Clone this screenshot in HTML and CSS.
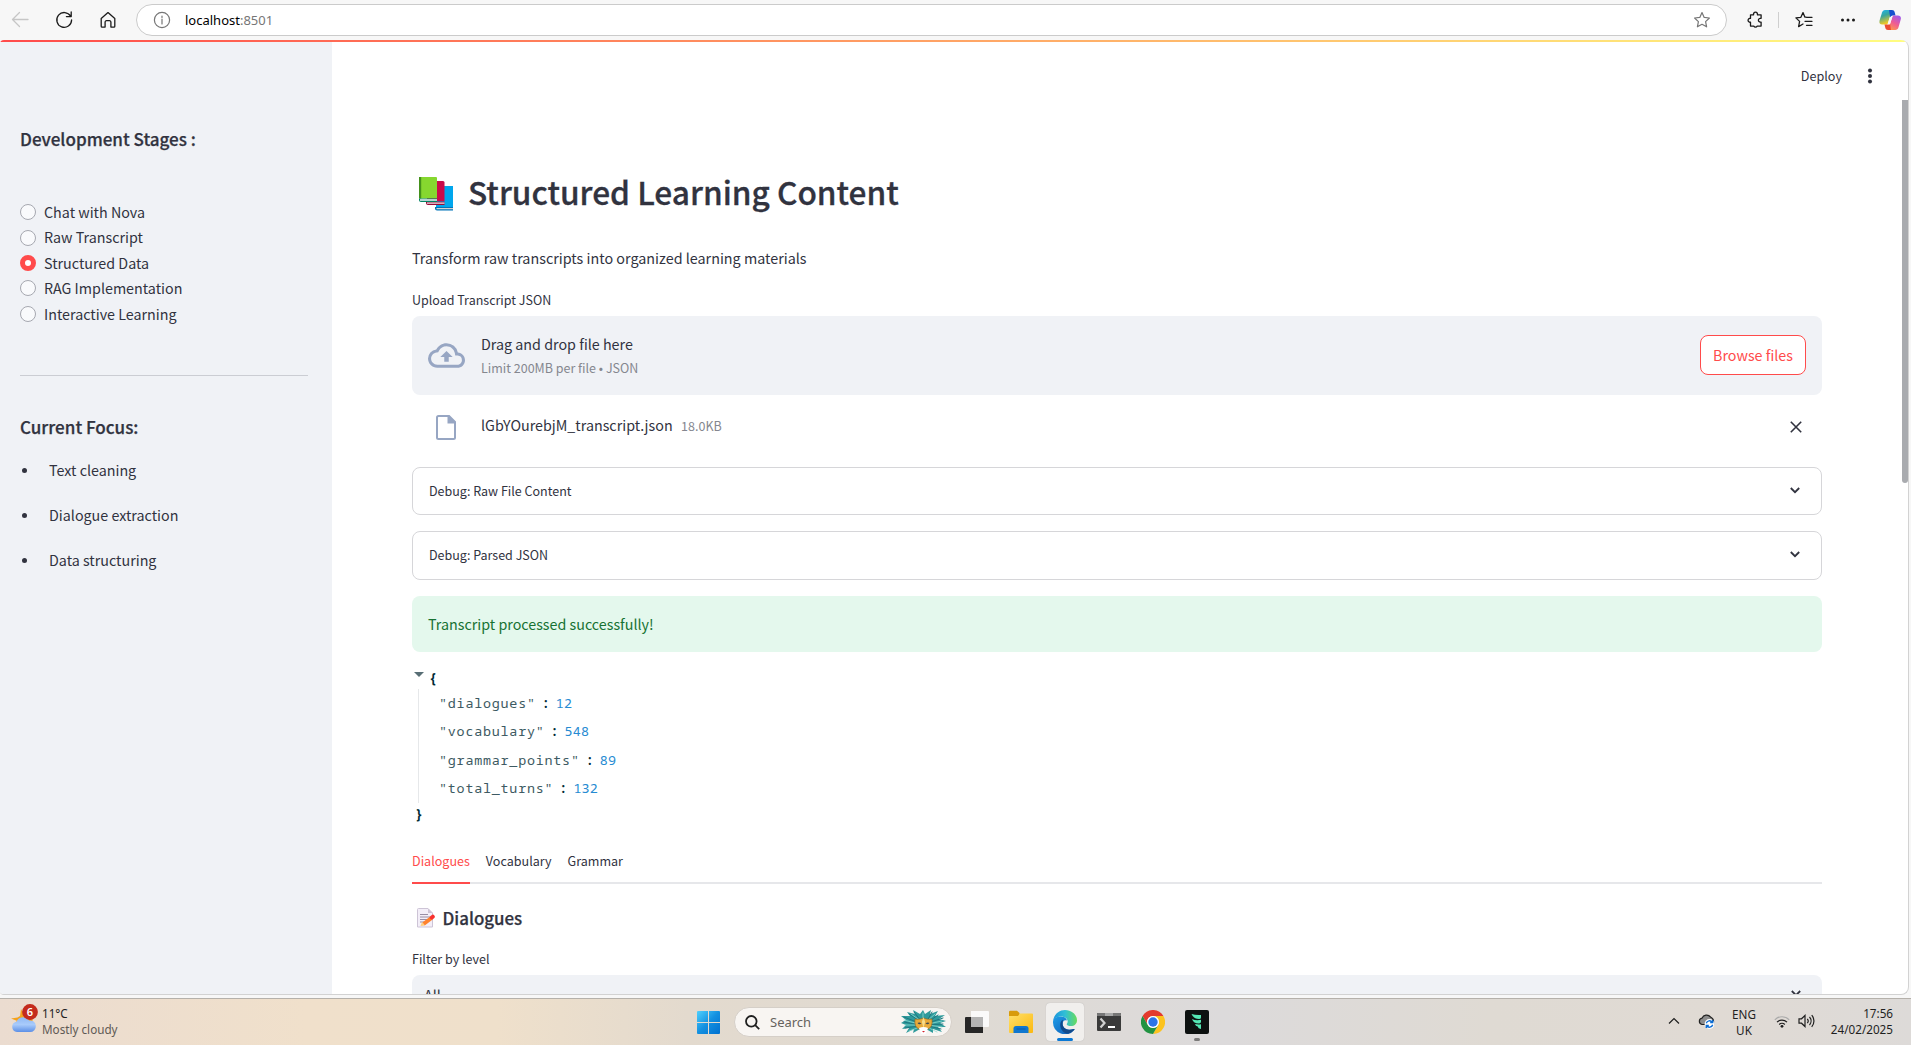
FILE: index.html
```html
<!DOCTYPE html>
<html lang="en">
<head>
<meta charset="utf-8">
<title>localhost:8501</title>
<link rel="stylesheet" href="styles.css">
</head>
<body>
<div class="toolbar">
  <svg class="ic back" width="18" height="18" viewBox="0 0 18 18"><path d="M17 8.5H1.5M8.5 1.5l-7 7 7 7"/></svg>
  <svg class="ic reload" width="18" height="18" viewBox="0 0 18 18"><path d="M15.6 5.2A7.4 7.4 0 1 0 16.6 9M16.2 1v4.6h-4.8"/></svg>
  <svg class="ic home" width="18" height="18" viewBox="0 0 18 18"><path d="M2.2 7.6 9 1.6l6.8 6v7.6a.9.9 0 0 1-.9.9h-3v-5a1.4 1.4 0 0 0-1.4-1.4h-3a1.4 1.4 0 0 0-1.4 1.4v5h-3a.9.9 0 0 1-.9-.9z"/></svg>
  <div class="address">
    <svg class="ic info" width="18" height="18" viewBox="0 0 18 18"><circle cx="9" cy="9" r="7.6"/><path d="M9 8v5M9 5v1.4"/></svg>
    <span class="url">localhost<i>:8501</i></span>
    <svg class="ic star" width="18" height="18" viewBox="0 0 18 18"><path d="m9 1.6 2.2 4.8 5.2.6-3.8 3.6 1 5.2L9 13.3l-4.600 2.500 1-5.200L1.600 7l5.200-.6z"/></svg>
  </div>
  <svg class="ic puzzle" width="18" height="18" viewBox="0 0 18 18"><path d="M4.500 3.800h3.100a2 2 0 1 1 3.800 0h3.700v3.500h-.8a1.900 1.900 0 1 0 0 3.800h.8v4h-3.900a2 2 0 0 1-3.400 0H4.500v-3.900a2 2 0 1 1 0-3.900z"/></svg>
  <span class="vsep"></span>
  <svg class="ic favs" width="18" height="18" viewBox="0 0 18 18"><path d="M11 6.200 9.800 6 8 1.600 5.900 6.300l-5 .6 3.700 3.500-1 5.200L8 13M11.500 6.300h5.500M10 10.300h7M11.500 14.300h5.500"/></svg>
  <svg class="more" width="16" height="4" viewBox="0 0 16 4"><circle cx="2.500" cy="2" r="1.500"/><circle cx="8" cy="2" r="1.500"/><circle cx="13.500" cy="2" r="1.500"/></svg>
  <svg class="copilot" width="22" height="20" viewBox="0 0 22 20">
    <defs>
      <linearGradient id="ca" x1="0" y1="0" x2="0.300" y2="1"><stop offset="0" stop-color="#1bb5f0"/><stop offset=".45" stop-color="#3aa59b"/><stop offset="1" stop-color="#f3c921"/></linearGradient>
      <linearGradient id="cb" x1="0.700" y1="0" x2="0.200" y2="1"><stop offset="0" stop-color="#a45be8"/><stop offset=".5" stop-color="#ef5c93"/><stop offset="1" stop-color="#ff9a4a"/></linearGradient>
    </defs>
    <path fill="url(#ca)" d="M6 0h7L8.500 14.500H3.200C1 14.500 0 13 .5 10.800L3 2.500C3.500 1 4.500 0 6 0z"/>
    <path fill="#1751cf" d="M10 0h3c1.500 0 2.300.8 2.700 2.200l.8 3.300h-2.300c-1.600 0-2.500.8-3 2.300z"/>
    <path fill="url(#cb)" d="M13.800 5.500h5c2.400 0 3.500 1.500 3 3.700l-2.300 8C19 19 18 20 16.200 20H9z"/>
    <path fill="#ea4c33" d="M12 20H9c-1.500 0-2.300-.8-2.700-2.200l-.8-3.300h2.300c1.600 0 2.500-.8 3-2.300z"/>
    <path fill="#f7f7f7" d="m10.800 7.500 3-2-2.500 7.800-.5 1.200H8.500z"/>
  </svg>
</div>

<div class="viewport">
  <div class="rainbow"></div>
  <div class="app">
    <aside class="sidebar">
      <h3>Development Stages :</h3>
      <div class="radios">
        <label class="radio"><b></b>Chat with Nova</label>
        <label class="radio"><b></b>Raw Transcript</label>
        <label class="radio on"><b></b>Structured Data</label>
        <label class="radio"><b></b>RAG Implementation</label>
        <label class="radio"><b></b>Interactive Learning</label>
      </div>
      <hr>
      <h3>Current Focus:</h3>
      <ul>
        <li>Text cleaning</li>
        <li>Dialogue extraction</li>
        <li>Data structuring</li>
      </ul>
    </aside>

    <main class="main">
      <div class="header">
        <span>Deploy</span>
        <svg width="6" height="16" viewBox="0 0 6 16"><circle cx="3" cy="2.500" r="2"/><circle cx="3" cy="8" r="2"/><circle cx="3" cy="13.500" r="2"/></svg>
      </div>
      <div class="content">
        <h1>
          <svg width="36" height="34" viewBox="0 0 36 34">
            <path fill="#00a6ed" d="M18 9h17v21H18z"/><path fill="#0074ba" d="M17 30h18v3.500H19q-2 0-2-2z"/><path fill="#d3d3d3" d="M18.500 31H35v1.300H18.500z"/>
            <path fill="#ca0b4a" d="M9 4h16q1.500 0 1.500 1.500V24H9z"/><path fill="#990838" d="M8 24.500h18.500V28H10q-2 0-2-2z"/><path fill="#e6e6e6" d="M9 25.500h17.500v1.300H9z"/>
            <path fill="#86d72f" d="M1.500 0H18q1 0 1 1v20.500H1.500z"/><path fill="#44911b" d="M1 0h2.200v21.500H1z"/><path fill="#008463" d="M1 21.500h18V25H3q-2 0-2-2z"/><path fill="#f3eef8" d="M2 22.300h17v1.400H2z"/>
          </svg>
          <span>Structured Learning Content</span>
        </h1>
        <p class="lead">Transform raw transcripts into organized learning materials</p>
        <div class="label">Upload Transcript JSON</div>
        <div class="dropzone">
          <svg width="37" height="37" viewBox="0 0 24 24"><path d="M19.350 10.040A7.490 7.490 0 0 0 12 4C9.110 4 6.600 5.640 5.350 8.040A5.994 5.994 0 0 0 0 14c0 3.310 2.690 6 6 6h13c2.760 0 5-2.240 5-5 0-2.640-2.050-4.780-4.650-4.960zM19 18H6c-2.210 0-4-1.790-4-4 0-2.050 1.530-3.760 3.560-3.970l1.070-.11.5-.95A5.469 5.469 0 0 1 12 6c2.620 0 4.880 1.860 5.390 4.430l.3 1.500 1.530.11A2.980 2.980 0 0 1 22 15c0 1.650-1.350 3-3 3zM8 13h2.550v3h2.900v-3H16l-4-4z"/></svg>
          <div class="dz-text"><div>Drag and drop file here</div><small>Limit 200MB per file • JSON</small></div>
          <button class="browse">Browse files</button>
        </div>
        <div class="file">
          <svg class="doc" width="20" height="25" viewBox="0 0 20 25"><path fill-rule="evenodd" d="M2.500 0h11L20 6.500v16a2.500 2.500 0 0 1-2.500 2.500h-15A2.500 2.500 0 0 1 0 22.500v-20A2.500 2.500 0 0 1 2.500 0zM2 2.500v20q0 .5.500.5h15q.5 0 .5-.5V8.500h-6.500V2h-9q-.5 0-.5.500z"/></svg>
          <span class="fname">lGbYOurebjM_transcript.json</span><small>18.0KB</small>
          <svg class="close" width="12" height="12" viewBox="0 0 12 12"><path d="m.8.800 10.400 10.400M11.200.800.800 11.200"/></svg>
        </div>
        <div class="expander"><span>Debug: Raw File Content</span><svg width="10" height="7" viewBox="0 0 10 7"><path d="m.8 1 4.200 4.200L9.200 1"/></svg></div>
        <div class="expander second"><span>Debug: Parsed JSON</span><svg width="10" height="7" viewBox="0 0 10 7"><path d="m.8 1 4.200 4.200L9.200 1"/></svg></div>
        <div class="success">Transcript processed successfully!</div>
        <div class="json">
          <div class="open"><svg width="10" height="5" viewBox="0 0 10 5"><path d="M0 0h10L5 5z"/></svg><b>{</b></div>
          <div class="rows">
            <div><span>"dialogues"</span><b>:</b><i>12</i></div>
            <div><span>"vocabulary"</span><b>:</b><i>548</i></div>
            <div><span>"grammar_points"</span><b>:</b><i>89</i></div>
            <div><span>"total_turns"</span><b>:</b><i>132</i></div>
          </div>
          <div class="end"><b>}</b></div>
        </div>
        <div class="tabs"><span class="active">Dialogues</span><span>Vocabulary</span><span>Grammar</span></div>
        <h2>
          <svg width="18" height="20" viewBox="0 0 18 20">
            <path fill="#f3eef8" stroke="#cdc4d6" d="M1.500.5h9.500l4.500 4.500v14H.5V1.500q0-1 1-1z"/><path fill="#cdc4d6" d="M11 .5V5h4.500z"/>
            <path stroke="#998ea4" stroke-width="1.200" d="M3 6.500h8M3 9h10M3 11.500h7M3 14h4"/>
            <path stroke="#ff822d" stroke-width="4" d="m6.500 16 8-6"/><path fill="#ffce7c" d="m3.500 18 1.500-4 3 3.500z"/><path stroke="#f8312f" stroke-width="4" d="m14.800 9.500 1-.8" stroke-linecap="round"/>
          </svg>
          <span>Dialogues</span>
        </h2>
        <div class="label filter">Filter by level</div>
        <div class="select"><span>All</span><svg width="10" height="7" viewBox="0 0 10 7"><path d="m.8 1 4.200 4.200L9.200 1"/></svg></div>
      </div>
      <div class="scrollbar"></div>
    </main>
  </div>
</div>

<div class="taskbar">
  <div class="weather">
    <svg width="28" height="30" viewBox="0 0 28 30">
      <defs><linearGradient id="cl" x1="0" y1="0" x2="0" y2="1"><stop offset="0" stop-color="#8fb8f4"/><stop offset=".5" stop-color="#a9cbfb"/><stop offset="1" stop-color="#5c8fe6"/></linearGradient></defs>
      <path fill="#f5a21b" d="m10 5 2.500 4.500 9 1v8H4l2.300-1.500L0 14.500l6.500-1L9 12z"/>
      <path fill="url(#cl)" d="M6 28a5.200 5.200 0 0 1-.5-10.300A7 7 0 0 1 18 16.500 5.800 5.800 0 1 1 19 28z"/>
      <circle cx="19" cy="8" r="7.900" fill="#c42b1c"/><text x="19" y="12" text-anchor="middle">6</text>
    </svg>
    <div><div>11°C</div><div class="dim">Mostly cloudy</div></div>
  </div>
  <svg class="start" width="23" height="23" viewBox="0 0 23 23"><defs><linearGradient id="w" x1="0" y1="0" x2="1" y2="1"><stop offset="0" stop-color="#4fd0fd"/><stop offset=".5" stop-color="#1390e0"/><stop offset="1" stop-color="#0070d0"/></linearGradient></defs><path fill="url(#w)" d="M1 0h10v11H0V1q0-1 1-1zm11 0h10q1 0 1 1v10H12zM0 12h11v11H1q-1 0-1-1zm12 0h11v10q0 1-1 1H12z"/></svg>
  <div class="search">
    <svg width="15" height="15" viewBox="0 0 15 15"><circle cx="6.300" cy="6.300" r="5.300"/><path d="m10.200 10.200 4 4"/></svg>
    <span>Search</span>
    <svg class="mask" width="45" height="25" viewBox="0 0 45 25">
      <path fill="#2f9a9b" d="m0 6 9 0-3-4 8 2-2-4 7 4 3-4 2 4 6-4-1 4 8-3-3 5 10-1-6 4 7 2-6 2 6 4-8 0 4 5-9-3 0 4-7-4-6 0-7 4 1-4-8 4 3-5-7 1 4-4-5-2 5-3z"/>
      <path fill="none" stroke="#1f7780" stroke-linecap="round" d="M18 13 3 7M18 15 3 12M18 16 4 18M20 12 8 4M20 11 13 2M26 11l5-9M27 12l10-7M27 13l15-5M27 15l15-1M27 16l13 3"/>
      <path fill="none" stroke="#8bdad2" stroke-width=".8" stroke-linecap="round" d="M18 14 3 10M18 15 4 15M19 17 8 21M20 11 10 4M27 14l14-3M27 15l14 2M26 17l10 5M26 11l8-7M22 8V3"/>
      <path fill="#e7a93a" stroke="#8d6420" stroke-width=".6" d="M14 9q4 1 8.500-1Q27 10 31 9q1 8-4 10l-4.500 1L18 19q-5-2-4-10z"/>
      <path fill="#f6dc8a" d="m22.500 7 1.700 5-1.700 6-1.700-6z"/><path fill="#fff" d="M18 18q4.500-2 9 0l-2 5.500q-2.500 2-5 0z"/>
      <path fill="#3d4a52" d="M16.500 13q2-1.500 4 .8-2.500 1.200-4-.8zm12 0q-2-1.500-4 .8 2.500 1.200 4-.8z"/><path fill="#d4212b" d="M21 21h3l-1.500 1.500z"/>
    </svg>
  </div>
  <div class="apps">
    <span><svg width="24" height="24" viewBox="0 0 24 24"><path fill="#fafafa" d="M6 1h17q1 0 1 1v14q0 1-1 1H6z"/><path fill="#262626" d="M0 8q0-1 1-1h17v16H1q-1 0-1-1z"/><path fill="#b4b4b4" d="M6 7h12v10H6z"/></svg></span>
    <span><svg width="24" height="24" viewBox="0 0 24 24"><defs><linearGradient id="fo" x1="0" y1="0" x2="1" y2="1"><stop offset="0" stop-color="#ffe06a"/><stop offset="1" stop-color="#fbb80f"/></linearGradient></defs><path fill="#d89b0b" d="M0 2q0-1.200 1.200-1.200H8L10.500 3v4H0z"/><path fill="url(#fo)" d="M0 6h9l2-2.500h12q1 0 1 1V22q0 1-1 1H1q-1 0-1-1z"/><path fill="#1077cf" d="M4.500 23v-4.500q0-2.500 2.500-2.500h10q2.500 0 2.500 2.500V23z"/><path fill="#0a5ba8" d="M7.500 18.500h9v1h-9z"/></svg></span>
    <span class="tile"><svg width="24" height="24" viewBox="0 0 24 24">
      <defs><linearGradient id="e1" x1="0" y1=".5" x2="1" y2=".5"><stop offset="0" stop-color="#1a93dc"/><stop offset=".5" stop-color="#30bfd6"/><stop offset="1" stop-color="#68dc5c"/></linearGradient><linearGradient id="e2" x1="0" y1="0" x2="1" y2="1"><stop offset="0" stop-color="#1e9de8"/><stop offset="1" stop-color="#0c58b4"/></linearGradient></defs>
      <path fill="url(#e2)" d="M0 12C0 8 4 6.300 8 6.500c4 .2 5.500 2 6 4-3-1-4.500 1-4.300 4 .3 4 5.300 6.500 10.800 4.500.8-.3 1.200.2.700.9A12 12 0 0 1 0 12z"/>
      <path fill="#114a8b" d="M9.700 9.800C6.300 12 6.500 18 10 21.500c2 1.900 4.500 2.300 6 1.800a12 12 0 0 0 5.400-3.500c.4-.6 0-1-.8-.7-5.700 2-10.600-.6-11-4.600-.1-2 .4-3.700.1-4.700z"/>
      <path fill="url(#e1)" d="M.1 11C.8 4.600 6 0 12 0c7 0 12 5 12 10.200 0 3.500-2.600 5.800-6 5.800-2.500 0-4.300-.8-4.300-1.800 0-.8 1-1 1-2.700 0-2.500-2.700-5-6.700-5C4 6.500 1 8.500.1 11z"/>
    </svg></span>
    <span><svg width="24" height="24" viewBox="0 0 24 24"><path fill="#3a3a3a" d="M0 4q0-1 1-1h22q1 0 1 1v16q0 1-1 1H1q-1 0-1-1z"/><path fill="#777" d="M1 3h7v3H0V4q0-1 1-1z"/><path fill="#a8a8a8" d="M8 3h8v3H8z"/><path fill="#777" d="M16 3h7q1 0 1 1v2h-8z"/><path fill="none" stroke="#d0d0d0" stroke-width="2.200" d="m3.500 8.500 4 4.500-4 4.500"/><path fill="#fff" d="M11 16h7v2h-7z"/></svg></span>
    <span><svg width="24" height="24" viewBox="0 0 24 24"><path fill="#e33b2e" d="M1.600 6A12 12 0 0 1 22.400 6H12a6 6 0 0 0-5.200 9z"/><path fill="#fcc31e" d="M22.400 6A12 12 0 0 1 12 24l5.200-9A6 6 0 0 0 12 6z"/><path fill="#229342" d="M1.600 6A12 12 0 0 0 12 24l5.200-9a6 6 0 0 1-10.400 0z"/><circle cx="12" cy="12" r="6" fill="#fff"/><circle cx="12" cy="12" r="4.700" fill="#2b74e8"/></svg></span>
    <span class="running"><svg width="24" height="24" viewBox="0 0 24 24"><rect width="24" height="24" rx="2" fill="#0d1110"/><path fill="#55e8b5" d="M6.500 4q4 1.300 9.500 1v2.500q0 1.500-2 1.500Q8.500 9 6.500 4zM7 9q4 2 9 .800v2q0 1.700-2 1.700Q8.500 13.500 7 9zM10 14q3 .8 6 .2v4.800q-3-.5-3.300-2.500Q10.500 16 10 14z"/></svg></span>
  </div>
  <div class="tray">
    <svg class="chev" width="12" height="8" viewBox="0 0 12 8"><path d="m1 6.500 5-5 5 5"/></svg>
    <svg class="cloud" width="17" height="15" viewBox="0 0 17 15"><path fill="#8c8c8c" stroke="#222" d="M4 10.500a3.200 3.200 0 0 1 0-6.300A5 5 0 0 1 12.500 3q3 1.500 3 4v3.500z"/><circle cx="11.500" cy="10" r="4.900" fill="#fff" stroke="none"/><path stroke="#0a6cd4" stroke-width="1.400" d="M8.300 9.200a3.400 3.400 0 0 1 6-1M14.700 6v2.500h-2.500M14.700 10.800a3.400 3.400 0 0 1-6 1M8.300 14v-2.500h2.500"/></svg>
    <div class="lang"><div>ENG</div><div>UK</div></div>
    <svg class="wifi" width="16" height="13" viewBox="0 0 16 13"><path stroke="#aaa" d="M.8 4.800a10 10 0 0 1 14.400 0"/><path d="M3 7.200a7 7 0 0 1 10 0M5.200 9.500a4 4 0 0 1 5.600 0"/><circle cx="8" cy="11.300" r="1.400" fill="#1f1f1f" stroke="none"/></svg>
    <svg class="vol" width="17" height="14" viewBox="0 0 17 14"><path d="M1 4.800h2.500L7 1.500v11L3.500 9.200H1zM9.300 4.800a3.400 3.400 0 0 1 0 4.400M11.500 3a6 6 0 0 1 0 8M13.700 1.200a8.600 8.600 0 0 1 0 11.600"/></svg>
    <div class="clock"><div>17:56</div><div>24/02/2025</div></div>
  </div>
</div>
</body>
</html>
```
FILE: styles.css
```css
* { box-sizing: border-box; }
body {
  margin: 0;
  width: 1911px;
  height: 1045px;
  overflow: hidden;
  display: flex;
  flex-direction: column;
  background: #f7f7f7;
  color: #31333f;
  font: 14.3px/24px "Noto Sans CJK JP", "Noto Sans", sans-serif;
}
h1, h2, h3, p, ul { margin: 0; padding: 0; font-weight: 500; }
svg { display: block; flex: none; }
i { font-style: normal; }

/* browser toolbar */
.toolbar {
  height: 40px;
  flex: none;
  display: flex;
  align-items: center;
  font-family: "Noto Sans", sans-serif;
}
.ic { fill: none; stroke: #1b1b1b; stroke-width: 1.300; stroke-linejoin: round; stroke-linecap: round; }
.back { margin-left: 11px; stroke: #c6c6c6; }
.reload { margin-left: 26px; }
.home { margin-left: 26px; }
.address {
  margin-left: 19px;
  width: 1591px;
  height: 32px;
  border: 1px solid #cbcbcb;
  border-radius: 16px;
  background: #fff;
  display: flex;
  align-items: center;
}
.info { margin-left: 16px; stroke: #767676; stroke-width: 1.200; }
.star { margin-left: auto; margin-right: 15px; stroke: #767676; stroke-width: 1.200; }
.url { margin-left: 14px; font-size: 13px; color: #000; line-height: 30px; }
.url i { color: #767676; }
.puzzle { margin-left: 19px; }
.vsep { width: 1px; height: 16px; margin: 0 16px 0 14px; background: #cfcfcf; }
.more { margin-left: 27px; fill: #1b1b1b; }
.copilot { margin-left: 23px; }

/* page */
.viewport {
  width: 1909px;
  height: 955px;
  flex: none;
  overflow: hidden;
  border: solid #d2d2d2;
  border-width: 0 1px 1px 0;
  border-radius: 4px 8px 8px 4px;
  background: #fff;
}
.rainbow { height: 2px; background: linear-gradient(90deg, #ff4b4b, #fffd80); }
.app { display: flex; height: 952px; }
.sidebar { width: 332px; background: #f0f2f6; padding: 85px 24px 0 20px; }
h3 { font-size: 17.050px; line-height: 24px; -webkit-text-stroke: .25px; }
.radios { margin-top: 48px; }
.radio { display: flex; align-items: center; height: 25.400px; line-height: 25.400px; }
.radio b { width: 16px; height: 16px; margin: 1px 8px 0 0; border: 1px solid #a6a8b0; border-radius: 50%; background: #f9fafc; }
.radio.on b { border: 5px solid #ff4b4b; background: #fff; }
hr { margin: 49px 0 39px; border: 0; height: 1px; background: #cbcdd3; }
ul { margin-top: 19px; list-style: none; }
li { display: flex; align-items: center; margin-bottom: 21px; font-weight: 400; }
li::before { content: ""; width: 5px; height: 5px; margin: 2px 22px 0 2px; border-radius: 50%; background: #31333f; }

.main { position: relative; flex: 1; }
.scrollbar { position: absolute; right: 0; top: 58px; width: 6px; height: 383px; background: #a9abaf; border-radius: 0 0 3px 3px; }
.header { height: 58px; padding: 24px 35px 0 0; display: flex; justify-content: flex-end; font-size: 12.600px; line-height: 20px; }
.header svg { margin: 2px 0 0 25px; fill: #31333f; }
.content { padding: 71px 86px 0 80px; }
h1 { display: flex; font-size: 31.650px; line-height: 40px; -webkit-text-stroke: .3px; }
h1 svg { margin: 6px 14px 0 6px; }
.lead { margin-top: 35px; font-weight: 400; font-size: 14.350px; }
.label { margin-top: 20px; font-size: 12.500px; line-height: 20px; }
small { font-size: 12.500px; color: #85878f; }
.dropzone { margin-top: 6px; height: 79px; padding: 0 16px; display: flex; align-items: center; border-radius: 8px; background: #f0f2f6; }
.dropzone svg { fill: #97a6c3; }
.dz-text { margin-left: 16px; line-height: 24px; }
.dz-text small { display: block; }
.browse { margin: 0 0 1px auto; width: 106px; height: 40px; padding: 0; border: 1px solid #ff4b4b; border-radius: 8px; background: #fff; color: #ff4b4b; font: inherit; }
.file { display: flex; align-items: center; margin: 18px 0 29px; height: 25px; padding: 0 20px 0 24px; }
.file span, .file small { position: relative; top: -.5px; }
.doc { margin: 3px 25px 0 0; fill: #97a6c3; }
.file small { margin: 1px 0 0 8.500px; }
.close { margin: 3px 0 0 auto; fill: none; stroke: #31333f; stroke-width: 1.600; }
.expander { height: 48px; padding: 0 21px 0 16px; display: flex; align-items: center; justify-content: space-between; border: 1px solid #d6d6d9; border-radius: 8px; font-size: 12.500px; }
.expander.second { height: 49px; margin-top: 16px; }
.expander.second span { margin-bottom: 1px; }
.expander svg, .select svg { margin-bottom: 2px; fill: none; stroke: #31333f; stroke-width: 1.800; }
.success { margin-top: 16px; height: 56px; line-height: 55px; padding-left: 16px; border-radius: 8px; background: #e4f8ed; color: #177233; }

.json { margin-top: 15px; font: 13.400px/28.400px "Noto Sans Mono", "DejaVu Sans Mono", monospace; color: #002b36; }
.open { display: flex; height: 22px; line-height: 22px; }
.open svg { margin: 5px 5px 0 2px; fill: #586e75; }
.rows { margin-left: 6px; padding-left: 20px; border-left: 1px solid #e6e8ea; }
.rows div { display: flex; }
.rows span { letter-spacing: .76px; color: #3d5a62; }
.rows b { margin: 0 6px 0 6px; font-weight: 600; }
.rows i { color: #268bd2; letter-spacing: .2px; }
.end { height: 25px; line-height: 22px; padding-left: 3px; }

.tabs { display: flex; gap: 16px; margin-top: 23.400px; height: 32.500px; font-size: 12.550px; line-height: 20px; border-bottom: 2px solid #e6e7ea; }
.tabs span { height: 32.500px; }
.tabs .active { color: #ff4b4b; border-bottom: 2px solid #ff4b4b; }
h2 { display: flex; margin-top: 20.500px; font-size: 16.900px; line-height: 28px; -webkit-text-stroke: .25px; }
h2 svg { margin: 4px 7.500px 0 5px; fill: none; }
.filter { margin-top: 16.500px; }
.select { margin-top: 6px; height: 40px; padding: 0 21px 0 12px; display: flex; align-items: center; justify-content: space-between; border-radius: 8px; background: #f0f2f6; }

/* taskbar */
.taskbar {
  margin-top: 3px;
  height: 47px;
  flex: none;
  display: flex;
  align-items: flex-start;
  border-top: 1px solid #b5b1ab;
  background: linear-gradient(90deg, #ebdcd0 0, #f0e0cb 16%, #efe0cb 26%, #e3dace 36%, #dfdad3 50%, #dcdadb 64%, #dfdad3 78%, #e0dad4 90%, #dddad8 100%);
  color: #1f1f1f;
  font: 11.700px/16px "Noto Sans", sans-serif;
}
.weather { display: flex; width: 697px; padding: 5px 0 0 11px; gap: 3px; }
.weather > div { padding-top: 1px; }
.weather text { font: 600 11px "Noto Sans", sans-serif; fill: #fff; }
.dim { color: #5f5a55; }
.start { margin-top: 12px; }
.search { margin: 8px 0 0 14px; width: 218px; height: 30px; padding: 0 5px 0 10px; display: flex; align-items: center; border: 1px solid #d5cfc8; border-radius: 15px; background: #f8f5f2; font-size: 13px; color: #66625e; }
.search > svg:first-child { fill: none; stroke: #1f1f1f; stroke-width: 1.800; }
.search span { margin: 0 0 1px 10px; }
.mask { margin-left: auto; }
.apps { display: flex; margin-left: 3px; }
.apps span { width: 44px; height: 46px; padding: 11px 10px 0; }
.apps .tile { position: relative; width: 38px; height: 38px; margin: 4px 3px 0; padding: 7px; border-radius: 4px; background: #f1efed; box-shadow: 0 0 1px #aaa; }
.tile::after, .running::after { content: ""; display: block; height: 3px; border-radius: 2px; margin: 4px auto 0; }
.tile::after { width: 16px; background: #0a78d4; }
.running::after { width: 6px; background: #7b7a79; }
.tray { margin-left: auto; display: flex; padding-right: 18px; }
.tray svg { fill: none; stroke: #1f1f1f; stroke-width: 1.200; }
.chev { margin: 18px 18px 0 0; }
.cloud { margin: 15px 16px 0 0; }
.lang { width: 26px; margin: 7px 17px 0 0; text-align: center; }
.wifi { margin: 16px 8px 0 0; }
.vol { margin: 15px 12px 0 0; }
.clock { width: 66px; margin-top: 6px; text-align: right; }
```
